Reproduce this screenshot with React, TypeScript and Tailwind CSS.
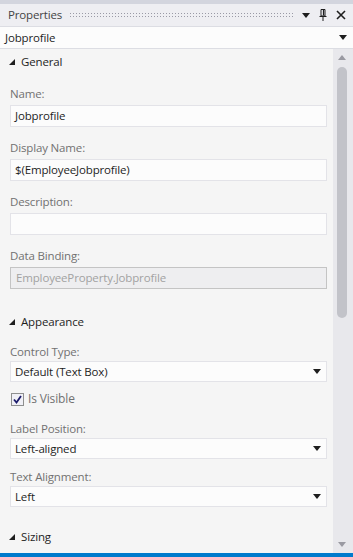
import React from 'react';

const font = { fontFamily: '"Segoe UI", "Open Sans", "Noto Sans", sans-serif' };

function SectionHeader({ title, className = '' }: { title: string; className?: string }) {
  return (
    <div className={`h-[26px] flex items-center gap-[6px] pl-[9px] text-[11.5px] tracking-[-0.15px] text-[#1e1e1e] ${className}`}>
      <svg width="6" height="6" viewBox="0 0 6 6" className="shrink-0">
        <polygon points="6,0 6,6 0,6" fill="#1e1e1e" />
      </svg>
      <span>{title}</span>
    </div>
  );
}

function Label({ text, className = '' }: { text: string; className?: string }) {
  return (
    <div className={`h-[16px] leading-[16px] text-[11.5px] tracking-[-0.15px] text-[#717171] ${className}`}>{text}</div>
  );
}

function TextBox({ value = '', className = '' }: { value?: string; className?: string }) {
  return (
    <div className={`h-[22px] flex items-center px-[4px] bg-[#fcfcfc] border border-[#e3e3e8] text-[11.5px] tracking-[-0.15px] text-[#1e1e1e] ${className}`}>
      {value}
    </div>
  );
}

function Caret() {
  return (
    <svg width="8" height="5" viewBox="0 0 8 5" className="shrink-0">
      <polygon points="0,0 8,0 4,5" fill="#1e1e1e" />
    </svg>
  );
}

function Select({ value, className = '' }: { value: string; className?: string }) {
  return (
    <div className={`h-[21px] flex items-center justify-between pl-[4px] pr-[5px] bg-[#fcfcfc] border border-[#e3e3e8] text-[11.5px] tracking-[-0.15px] text-[#1e1e1e] ${className}`}>
      <span>{value}</span>
      <Caret />
    </div>
  );
}

export default function App() {
  return (
    <div className="w-[353px] h-[557px] flex flex-col bg-[#f5f5f5] overflow-hidden" style={font}>
      {/* window top strip */}
      <div className="h-[4px] bg-[#d3d5de] shrink-0" />

      {/* tool window title bar */}
      <div className="h-[22px] shrink-0 flex items-center bg-[#eeeef2] pl-[8px] pr-[7px]">
        <span className="text-[11.5px] tracking-[-0.15px] text-[#444444]">Properties</span>
        <div className="flex-1 mx-[7px] h-[6px] bg-[radial-gradient(circle,#9a9aa6_0.6px,transparent_0.9px)] bg-[length:3px_3px]" />
        <div className="flex items-center gap-[9px]">
          <svg width="8" height="5" viewBox="0 0 8 5">
            <polygon points="0,0 8,0 4,5" fill="#1e1e1e" />
          </svg>
          <svg width="8" height="12" viewBox="0 0 8 12">
            <path d="M2 0.5H6V7H2Z M0.5 7.5H7.5 M4 8V12" stroke="#1e1e1e" strokeWidth="1" fill="none" />
            <path d="M4.5 1V6.5" stroke="#1e1e1e" strokeWidth="1.2" />
          </svg>
          <svg width="10" height="10" viewBox="0 0 10 10">
            <path d="M1 1L9 9M9 1L1 9" stroke="#1e1e1e" strokeWidth="1.6" />
          </svg>
        </div>
      </div>

      {/* object selector */}
      <div className="h-[23px] shrink-0 flex items-center justify-between pl-[5px] pr-[6px] bg-[#fcfcfc] border-y border-[#dcdde3] text-[11.5px] tracking-[-0.15px] text-[#1e1e1e]">
        <span>Jobprofile</span>
        <Caret />
      </div>

      {/* property grid */}
      <div className="flex-1 flex min-h-0">
        <div className="flex-1 flex flex-col">
          <SectionHeader title="General" />
          <div className="pl-[10px] pr-[6px] flex flex-col">
            <Label text="Name:" className="mt-[11px]" />
            <TextBox value="Jobprofile" className="mt-[3px]" />
            <Label text="Display Name:" className="mt-[13px]" />
            <TextBox value="$(EmployeeJobprofile)" className="mt-[3px]" />
            <Label text="Description:" className="mt-[13px]" />
            <TextBox className="mt-[3px]" />
            <Label text="Data Binding:" className="mt-[13px]" />
            <div className="mt-[3px] h-[22px] flex items-center px-[5px] bg-[#eeeef0] border border-[#c4c4c4] text-[11.5px] tracking-[-0.15px] text-[#a2a2a2]">
              EmployeeProperty.Jobprofile
            </div>
          </div>

          <SectionHeader title="Appearance" className="mt-[20px]" />
          <div className="pl-[10px] pr-[6px] flex flex-col">
            <Label text="Control Type:" className="mt-[9px]" />
            <Select value="Default (Text Box)" className="mt-[1px]" />
            <div className="mt-[9px] h-[16px] flex items-center gap-[4px] pl-[1px]">
              <div className="w-[13px] h-[13px] border border-[#8e8f8f] bg-[#f0f0f6] flex items-center justify-center">
                <svg width="9" height="9" viewBox="0 0 9 9">
                  <path d="M1 4.5L3.5 7.5L8 1" stroke="#1b1b6b" strokeWidth="1.8" fill="none" />
                </svg>
              </div>
              <span className="text-[12px] tracking-[-0.15px] text-[#717171]">Is Visible</span>
            </div>
            <Label text="Label Position:" className="mt-[14px]" />
            <Select value="Left-aligned" className="mt-[1px]" />
            <Label text="Text Alignment:" className="mt-[10px]" />
            <Select value="Left" className="mt-[1px]" />
          </div>

          <SectionHeader title="Sizing" className="mt-[17px]" />
        </div>

        {/* vertical scrollbar */}
        <div className="w-[20px] bg-[#e8e8ec] flex flex-col items-start pl-[4px]">
          <div className="h-[17px] w-[10px] flex items-center justify-center">
            <svg width="8" height="5" viewBox="0 0 8 5">
              <polygon points="4,0 8,5 0,5" fill="#9a9aa2" />
            </svg>
          </div>
          <div className="w-[10px] h-[251px] mt-[1px] bg-[#c2c3c9] rounded-[5px]" />
          <div className="flex-1" />
          <div className="h-[17px] w-[10px] flex items-center justify-center">
            <svg width="8" height="5" viewBox="0 0 8 5">
              <polygon points="0,0 8,0 4,5" fill="#9a9aa2" />
            </svg>
          </div>
        </div>
      </div>

      {/* status strip */}
      <div className="h-[4px] shrink-0 bg-[#007acc]" />
    </div>
  );
}
